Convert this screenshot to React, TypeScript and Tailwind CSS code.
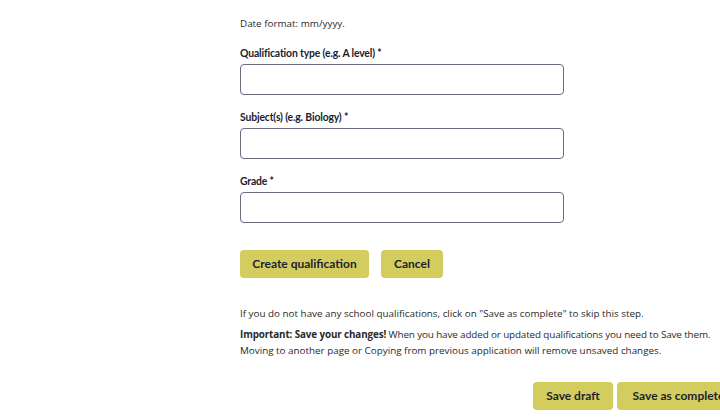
import React from 'react'

const body = { fontFamily: '"Open Sans", "Liberation Sans", sans-serif' }
const head = { fontFamily: 'Lato, "Noto Sans", sans-serif' }

function Field({ label }: { label: string }) {
  return (
    <div className="mb-[15px]">
      <label className="block text-[10.4px] tracking-[-0.15px] leading-[14px] font-bold text-[#1c1c2e] mb-[4px]" style={head}>
        {label}
      </label>
      <input className="block w-[324px] h-[31px] rounded-[4px] border border-[#6e6a82] bg-white outline-none" />
    </div>
  )
}

function Btn({ children, className = '' }: { children: React.ReactNode; className?: string }) {
  return (
    <button
      className={`h-[28px] rounded-[4px] bg-[#d3cd5f] text-[#1e1e30] text-[12px] font-bold whitespace-nowrap ${className}`}
      style={head}
    >
      {children}
    </button>
  )
}

export default function App() {
  return (
    <div className="w-[720px] h-[420px] overflow-hidden bg-white">
      <div className="ml-[240px] w-[500px] pt-[15px]">
        <p className="text-[9.85px] leading-[16px] text-[#2a2a2a] mb-[15px]" style={body}>
          Date format: mm/yyyy.
        </p>

        <Field label="Qualification type (e.g. A level) *" />
        <Field label="Subject(s) (e.g. Biology) *" />
        <Field label="Grade *" />

        <div className="flex gap-[12px] mt-[27px]">
          <Btn className="w-[129px]">Create qualification</Btn>
          <Btn className="w-[62px]">Cancel</Btn>
        </div>

        <div className="mt-[27px] text-[9.85px] leading-[16px] text-[#2a2a2a]" style={body}>
          <p className="mb-[5px]">
            If you do not have any school qualifications, click on "Save as complete" to skip this step.
          </p>
          <p className="whitespace-nowrap">
            <span className="tracking-[-0.12px]">
              <strong className="font-bold">Important: Save your changes!</strong> When you have added or updated qualifications you need to Save them.
            </span>
            <br />
            Moving to another page or Copying from previous application will remove unsaved changes.
          </p>
        </div>

        <div className="flex justify-end gap-[4px] mt-[24px]">
          <Btn className="w-[80px]">Save draft</Btn>
          <Btn className="w-[123px]">Save as complete</Btn>
        </div>
      </div>
    </div>
  )
}
